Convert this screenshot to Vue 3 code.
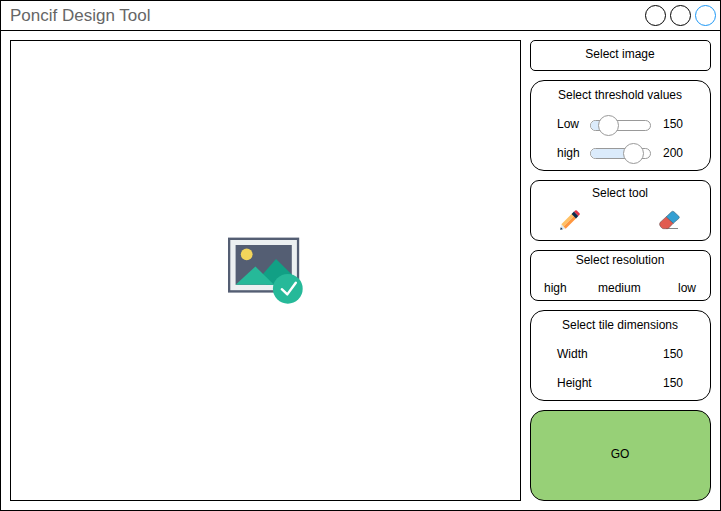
<script setup>
import { ref } from 'vue'

const thresholds = ref([
  { label: 'Low', value: 150, percent: 30.4 },
  { label: 'high', value: 200, percent: 71.4 },
])
const dimensions = ref([
  { label: 'Width', value: 150 },
  { label: 'Height', value: 150 },
])
const resolutions = ['high', 'medium', 'low']
</script>

<template>
  <div class="window">
    <header class="titlebar">
      <h1>Poncif Design Tool</h1>
      <div class="controls">
        <svg v-for="n in 3" :key="n" class="control" :class="{ accent: n === 3 }" viewBox="0 0 21 21">
          <circle cx="10.5" cy="10.5" r="10" />
        </svg>
      </div>
    </header>
    <main class="content">
      <section class="canvas">
        <svg class="picture" width="76" height="68" viewBox="0 0 76 68">
          <rect x="0" y="0.6" width="71.2" height="55" fill="#545e73" />
          <rect x="2.3" y="3" width="66.6" height="50.2" fill="#ecf0f1" />
          <rect x="7.6" y="8" width="56.2" height="39.8" fill="#545e73" />
          <circle cx="18.7" cy="17.3" r="5.9" fill="#f3d55b" />
          <path d="M35 37 L48 21.9 L63.8 37.5 V47.8 H38Z" fill="#11a085" />
          <path d="M7.6 47.8 L27.4 29.5 L46 47.8Z" fill="#26b999" />
          <circle cx="59.8" cy="51.8" r="14.9" fill="#26b999" />
          <path d="M53.8 52.2 L59.3 57.4 L67.8 45.8" fill="none" stroke="#fff" stroke-width="2.4" stroke-linecap="round" stroke-linejoin="round" />
        </svg>
      </section>
      <aside class="sidebar">
        <button class="panel image">Select image</button>
        <section class="panel group">
          <h2>Select threshold values</h2>
          <div v-for="t in thresholds" :key="t.label" class="row">
            <span>{{ t.label }}</span>
            <div class="slider">
              <div class="track"><div class="fill" :style="{ width: t.percent + '%' }"></div></div>
              <div class="thumb" :style="{ left: t.percent + '%' }"></div>
            </div>
            <span class="value">{{ t.value }}</span>
          </div>
        </section>
        <section class="panel tools">
          <h2>Select tool</h2>
          <div class="toolrow">
            <svg width="20" height="20" viewBox="0 0 20 20">
              <path d="M1.5 14.5 L5.5 18.5 L0.3 19.7Z" fill="#dce9f2" />
              <path d="M0.8 17.2 L2.8 19.2 L0.2 19.8Z" fill="#0d2b4e" />
              <path d="M1.3 14.3 L12.3 3.3 L14.5 5.5 L3.5 16.5Z" fill="#ffc166" />
              <path d="M3.5 16.5 L14.5 5.5 L16.7 7.7 L5.7 18.7Z" fill="#ff9740" />
              <path d="M11.6 4 L14 1.6 L18.4 6 L16 8.4Z" fill="#0d2b4e" />
              <path d="M14 1.6 L15.2 .5 Q16 -.1 16.8 .5 L19.5 3.2 Q20.1 4 19.5 4.8 L18.4 6Z" fill="#e03246" />
            </svg>
            <svg width="22" height="20" viewBox="0 0 22 20">
              <path d="M7 18.5 H19" stroke="#777" stroke-width=".9" />
              <path d="M1 12.5 L7.3 6.7 L14.3 13.3 L9.5 18.2 Q9 18.7 8.2 18.7 H4.4 Q3.5 18.7 2.8 18 L1.1 16 Q0 14.2 1 12.5Z" fill="#e15b50" stroke="#594548" stroke-width=".5" />
              <path d="M7.3 6.7 L12.5 1.8 Q13.8 .6 15 1.8 L19.8 6.2 Q21 7.3 19.8 8.5 L14.3 13.3Z" fill="#349fd2" stroke="#315064" stroke-width=".5" />
            </svg>
          </div>
        </section>
        <section class="panel resolution">
          <h2>Select resolution</h2>
          <div class="options"><span v-for="r in resolutions" :key="r">{{ r }}</span></div>
        </section>
        <section class="panel group">
          <h2>Select tile dimensions</h2>
          <div v-for="d in dimensions" :key="d.label" class="row">
            <span>{{ d.label }}</span>
            <span class="value">{{ d.value }}</span>
          </div>
        </section>
        <button class="panel go">GO</button>
      </aside>
    </main>
  </div>
</template>

<style>
body { background: #fff; }
</style>

<style scoped>
* { box-sizing: border-box; }
.window {
  width: 721px;
  height: 511px;
  border: 1px solid #000;
  background: #fff;
  font: 12px/14px Helvetica, "Liberation Sans", Arial, sans-serif;
  color: #000;
}
.titlebar {
  height: 30px;
  padding: 0 4px 0 9px;
  border-bottom: 1px solid #000;
  display: flex;
  align-items: center;
  justify-content: space-between;
}
h1 { margin: 0; font-size: 17px; line-height: 20px; font-weight: 400; color: #666; }
.controls { display: flex; gap: 4px; }
.control { display: block; width: 21px; height: 21px; fill: none; stroke: #000; stroke-width: 1; }
.accent { stroke: #1c97f5; }
.content { display: flex; gap: 9px; padding: 9px; }
.canvas {
  width: 511px;
  height: 461px;
  border: 1px solid #000;
  display: flex;
  align-items: center;
  justify-content: center;
}
.picture { display: block; }
.sidebar { width: 181px; display: flex; flex-direction: column; gap: 9px; }
.panel {
  width: 181px;
  margin: 0;
  padding: 0;
  border: 1px solid #000;
  border-radius: 9px;
  background: #fff;
  font: inherit;
  color: inherit;
  text-align: center;
}
.panel h2 { margin: 0; padding-right: 1px; font-size: 12px; line-height: 14px; font-weight: 400; }
.image { height: 31px; border-radius: 5px; padding: 0 1px 3px 0; }
.group { height: 91px; border-radius: 14px; padding: 7px 27px 0 26px; }
.group h2 { padding-right: 0; }
.row { height: 14px; margin-top: 15px; display: flex; justify-content: space-between; }
.slider { position: relative; width: 61px; height: 11px; margin: 3px 0 0 auto; }
.row + .row .slider { margin-top: 2px; }
.slider + .value { margin-left: 12px; }
.track { height: 11px; border: 1px solid #999; border-radius: 6px; overflow: hidden; }
.fill { height: 100%; background: #dbebfb; }
.thumb {
  position: absolute;
  top: -5px;
  width: 21px;
  height: 21px;
  margin-left: -10.5px;
  border: 1px solid #999;
  border-radius: 50%;
  background: #fff;
}
.tools { height: 61px; padding-top: 5px; }
.toolrow { display: flex; justify-content: space-between; padding: 10px 29px 0 29px; }
.resolution { height: 51px; padding-top: 2px; border-radius: 8px; }
.options { display: grid; grid-template-columns: 54px 1fr auto; padding: 14px 14px 0 13px; text-align: left; }
.go { height: 91px; border-radius: 14px; background: #97d077; padding: 0 1px 3px 0; }
</style>
